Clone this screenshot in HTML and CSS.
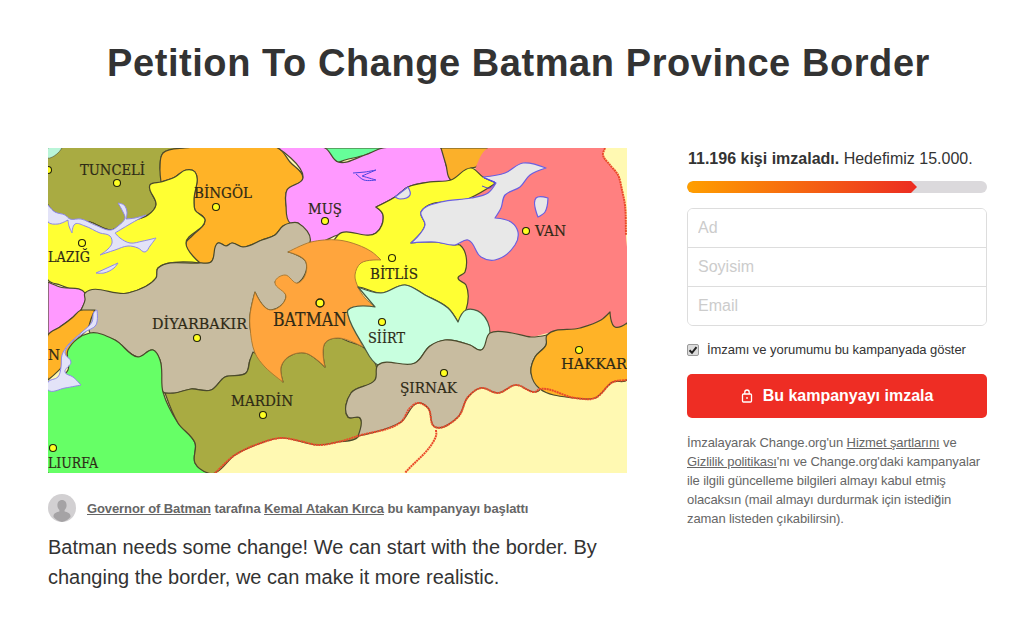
FILE: index.html
```html
<!DOCTYPE html>
<html lang="tr">
<head>
<meta charset="utf-8">
<title>Petition To Change Batman Province Border</title>
<link rel="stylesheet" href="styles.css">
<script src="map.js" defer></script>
</head>
<body>
<h1 class="title">Petition To Change Batman Province Border</h1>
<main class="columns">
  <section class="story">
    <svg class="map" viewBox="48 148 579 325" width="579" height="325" role="img" aria-label="Map of Batman province and its neighbours">
      <g class="shapes">
        <rect class="sea" x="48" y="148" width="579" height="325"/>
        <polygon class="olive" points="48,148 185,148 170,150 163,153 160,168 162,182 150,185 156,205 148,215 125,223 111,230 90,222 70,220 48,205"/>
        <polygon class="mint-corner" points="48,148 62,148 58,153 50,158 48,158"/>
        <polygon class="green-corner" points="325,148 383,148 365,155 345,160 338,162 330,156"/>
        <polygon class="amber" points="185,148 278,148 290,162 303,178 296,185 287,190 286,205 290,223 283,226 275,235 262,240 243,247 232,243 226,246 218,243 215,252 211,262 200,263 186,243 192,236 205,220 195,210 194,200 195,172 186,170 175,177 161,182 160,168 163,153"/>
        <polygon class="pink" points="278,148 325,148 338,162 365,155 383,148 441,148 446,165 450,180 430,182 408,187 395,197 376,207 383,215 376,233 338,235 318,243 310,242 298,223 290,223 286,205 287,190 303,178"/>
        <polygon class="amber-soft" points="441,148 488,148 476,167 471,168 465,177 451,180 446,165"/>
        <polygon class="red-land" points="488,148 605,148 603,155 610,165 618,175 622,190 625,205 626,235 627,323 615,327 610,312 601,320 580,328 548,333 531,337 512,333 490,333 481,313 466,310 466,285 458,278 465,272 460,245 476,167"/>
        <polygon class="yellow" points="48,222 48,280 60,285 85,293 128,293 156,278 158,268 200,263 186,243 205,220 195,210 194,200 195,172 186,170 175,177 161,182 150,185 156,205 148,215 125,223 111,230 90,222 70,220"/>
        <polygon class="yellow" points="471,168 483,177 496,183 470,198 421,212 425,225 411,243 435,242 455,245 460,245 465,272 458,278 466,285 466,310 458,322 448,308 425,295 405,285 381,293 358,287 338,290 338,235 376,233 383,215 376,207 395,197 408,187 430,182 451,180"/>
        <polygon class="pink" points="48,282 60,287 85,293 81,310 72,318 60,327 48,335"/>
        <polygon class="amber" points="81,310 95,310 92,320 85,332 72,345 65,363 48,380 48,335 60,327 72,318"/>
        <polygon class="tan" points="85,293 128,293 156,278 158,268 200,263 211,262 218,243 226,246 232,243 243,247 262,240 275,235 283,226 290,223 298,223 310,242 288,252 306,262 298,283 275,282 286,297 270,310 255,292 250,315 250,327 255,353 250,360 246,373 225,377 211,390 191,389 175,393 163,392 160,360 153,350 138,357 115,340 90,333 95,310 81,310 85,300"/>
        <polygon class="green" points="90,333 115,340 138,357 153,350 160,360 163,392 178,423 195,443 195,463 208,473 48,473 48,388 68,370 68,350"/>
        <polygon class="olive" points="165,393 175,393 191,389 211,390 225,377 246,373 250,360 253,352 265,360 283,382 281,367 288,357 305,353 325,367 325,343 338,338 350,342 363,347 376,365 375,380 351,393 348,417 360,418 358,437 338,442 318,445 281,438 261,443 235,455 215,473 208,473 195,463 195,443 178,423"/>
        <polygon class="batman" points="288,252 311,242 338,240 358,245 372,252 381,260 361,263 355,275 358,287 365,298 375,307 348,310 348,315 356,332 363,347 338,338 325,343 325,367 305,353 288,357 281,367 283,382 265,367 255,353 250,327 250,315 255,292 270,310 286,297 275,282 285,275 298,283 306,262"/>
        <polygon class="mint" points="358,287 381,293 405,285 425,295 448,308 458,322 466,310 481,313 490,333 481,350 470,345 445,340 430,346 415,363 378,365 363,345 348,315 348,310 375,307"/>
        <polygon class="tan" points="378,365 415,363 430,346 445,340 470,345 481,350 490,333 512,333 531,337 547,335 546,345 535,357 531,373 540,389 535,392 516,385 498,393 481,388 468,397 458,417 435,427 428,408 418,403 401,422 358,436 360,418 348,417 351,393 375,380"/>
        <polygon class="amber" points="547,335 580,328 601,320 610,312 615,327 627,323 627,380 613,382 595,398 575,398 540,389 531,373 535,357 546,345"/>
        <polygon class="lake" points="546,168 523,163 505,173 483,177 496,183 488,193 471,198 441,202 421,212 425,225 411,243 435,242 455,245 468,240 481,257 495,260 515,245 518,232 511,222 495,218 501,208 505,195 520,187 530,175"/>
        <polygon class="lake" points="536,198 548,198 545,212 538,217"/>
        <polygon class="lake" points="395,197 408,187 410,195 400,199"/>
        <polygon class="water" points="48,205 55,212 65,215 70,219 81,219 95,225 111,230 118,226 125,218 123,212 118,203 124,205 127,212 126,219 135,218 146,215 130,224 115,233 120,238 130,243 143,241 156,238 150,246 145,252 138,248 128,246 115,250 100,255 108,249 112,243 110,236 100,233 85,226 75,224 72,233 69,226 68,220 58,224 48,222"/>
        <polygon class="water" points="96,273 118,263 114,268 104,273"/>
        <polygon class="water" points="97,310 96,325 85,332 71,343 65,353 71,362 65,372 73,377 81,385 65,388 48,390 48,382 58,377 61,367 62,355 68,345 82,332 92,322 94,312"/>
        <polyline class="squiggle" points="353,173 365,172 376,170 362,176 376,180 364,180 356,174"/>
        <polyline class="squiggle" points="484,178 495,182 490,188 482,186"/>
        <polyline class="border" points="215,473 235,455 261,443 281,438 300,441 318,445 338,442 358,436 401,422 410,408 418,403 428,408 435,427 458,417 468,397 481,388 498,393 516,385 535,392 540,389 575,398 595,398 613,382 627,380"/>
        <polyline class="border" points="436,430 436,436 405,473"/>
        <polyline class="border" points="605,148 603,155 610,165 618,175 622,190 625,205 626,235"/>
      </g>
      <g class="dots">
        <circle cx="48" cy="170" r="3.5"/><circle cx="117" cy="183" r="3.5"/><circle cx="216" cy="207" r="3.5"/><circle cx="325" cy="221" r="3.5"/>
        <circle cx="82" cy="243" r="3.5"/><circle class="large" cx="320" cy="303" r="4"/><circle cx="392" cy="258" r="3.5"/>
        <circle cx="526" cy="231" r="3.5"/><circle cx="382" cy="322" r="3.5"/><circle cx="197" cy="338" r="3.5"/>
        <circle cx="263" cy="415" r="3.5"/><circle cx="444" cy="373" r="3.5"/><circle cx="579" cy="350" r="3.5"/>
        <circle cx="53" cy="448" r="3.5"/>
      </g>
      <g class="labels">
        <text x="80" y="175" lengthAdjust="spacingAndGlyphs" textLength="65">TUNCELİ</text>
        <text x="194" y="198" lengthAdjust="spacingAndGlyphs" textLength="58">BİNGÖL</text>
        <text x="308" y="214" lengthAdjust="spacingAndGlyphs" textLength="34">MUŞ</text>
        <text x="48" y="262" lengthAdjust="spacingAndGlyphs" textLength="42">LAZIĞ</text>
        <text x="152" y="329" lengthAdjust="spacingAndGlyphs" textLength="95">DİYARBAKIR</text>
        <text class="big" x="273" y="326" lengthAdjust="spacingAndGlyphs" textLength="74">BATMAN</text>
        <text x="370" y="279" lengthAdjust="spacingAndGlyphs" textLength="48">BİTLİS</text>
        <text x="368" y="343" lengthAdjust="spacingAndGlyphs" textLength="37">SİİRT</text>
        <text x="535" y="236" lengthAdjust="spacingAndGlyphs" textLength="31">VAN</text>
        <text x="400" y="393" lengthAdjust="spacingAndGlyphs" textLength="57">ŞIRNAK</text>
        <text x="231" y="406" lengthAdjust="spacingAndGlyphs" textLength="62">MARDİN</text>
        <text x="561" y="369" lengthAdjust="spacingAndGlyphs" textLength="66">HAKKAR</text>
        <text x="48" y="468" lengthAdjust="spacingAndGlyphs" textLength="50">LIURFA</text>
        <text x="48" y="360" lengthAdjust="spacingAndGlyphs" textLength="12">N</text>
      </g>
    </svg>
    <div class="byline">
      <svg class="avatar" viewBox="0 0 28 28" width="28" height="28" aria-hidden="true">
        <circle class="avatar-bg" cx="14" cy="14" r="14"/>
        <path class="avatar-fg" d="M14 6c3 0 4.600 2.300 4.600 5.200 0 2-.8 3.700-2 4.800v1.400c2.700.6 5.900 1.900 5.900 4.600v1.100A13.900 13.900 0 0 1 14 28a13.900 13.900 0 0 1-8.500-4.900V22c0-2.700 3.200-4 5.900-4.600V16c-1.200-1.100-2-2.800-2-4.800C9.400 8.300 11 6 14 6z"/>
      </svg>
      <p class="byline-text"><a href="#">Governor of Batman</a> tarafına <a href="#">Kemal Atakan Kırca</a> bu kampanyayı başlattı</p>
    </div>
    <p class="lead">Batman needs some change! We can start with the border. By changing the border, we can make it more realistic.</p>
  </section>
  <aside class="sign">
    <p class="count"><strong>11.196 kişi imzaladı.</strong> Hedefimiz 15.000.</p>
    <div class="progress"><div class="progress-fill"></div></div>
    <form class="fields">
      <input class="field" type="text" placeholder="Ad">
      <input class="field" type="text" placeholder="Soyisim">
      <input class="field" type="text" placeholder="Email">
    </form>
    <label class="consent">
      <span class="check"><svg viewBox="0 0 12 12" width="12" height="12" aria-hidden="true"><path d="M2.500 6.300l2.500 2.500 4.500-5.600" /></svg></span>
      <span>İmzamı ve yorumumu bu kampanyada göster</span>
    </label>
    <button class="cta" type="button">
      <svg class="lock" viewBox="0 0 12 14" width="12" height="14" aria-hidden="true"><rect x="1.500" y="5" width="9" height="8" rx="1"/><path d="M3.800 5V3.200a2.200 2.200 0 0 1 4.400 0V5"/><path d="M6 8v2"/></svg>
      <span>Bu kampanyayı imzala</span>
    </button>
    <p class="legal">İmzalayarak Change.org'un <a href="#">Hizmet şartlarını</a> ve<br><a href="#">Gizlilik politikası</a>'nı ve Change.org'daki kampanyalar<br>ile ilgili güncelleme bilgileri almayı kabul etmiş<br>olacaksın (mail almayı durdurmak için istediğin<br>zaman listeden çıkabilirsin).</p>
  </aside>
</main>
</body>
</html>
```
FILE: map.js
```js
// Turns the map's measured outlines into smooth curves, keeping sharp cusps sharp.
document.querySelectorAll('.shapes polygon, .shapes polyline').forEach(function (el) {
  var closed = el.tagName.toLowerCase() === 'polygon';
  var pts = el.getAttribute('points').trim().split(/\s+/).map(function (s) {
    return s.split(',').map(Number);
  });
  var n = pts.length;
  function at(i) {
    return closed ? pts[(i + n) % n] : pts[Math.max(0, Math.min(n - 1, i))];
  }
  function tangent(i) {
    var a = at(i - 1), b = at(i), c = at(i + 1);
    var ux = b[0] - a[0], uy = b[1] - a[1], vx = c[0] - b[0], vy = c[1] - b[1];
    var lu = Math.hypot(ux, uy) || 1, lv = Math.hypot(vx, vy) || 1;
    if ((ux * vx + uy * vy) / (lu * lv) < -0.2) return [0, 0];
    var tx = ux / lu + vx / lv, ty = uy / lu + vy / lv, l = Math.hypot(tx, ty) || 1;
    return [tx / l, ty / l];
  }
  var d = 'M' + pts[0].join(' ');
  var end = closed ? n : n - 1;
  for (var i = 0; i < end; i++) {
    var p = at(i), q = at(i + 1), s = Math.hypot(q[0] - p[0], q[1] - p[1]) * 0.33;
    var t0 = tangent(i), t1 = tangent(i + 1);
    d += 'C' + (p[0] + t0[0] * s).toFixed(1) + ' ' + (p[1] + t0[1] * s).toFixed(1) + ' ' +
      (q[0] - t1[0] * s).toFixed(1) + ' ' + (q[1] - t1[1] * s).toFixed(1) + ' ' + q.join(' ');
  }
  if (closed) d += 'Z';
  var path = document.createElementNS('http://www.w3.org/2000/svg', 'path');
  path.setAttribute('d', d);
  path.setAttribute('class', el.getAttribute('class'));
  el.parentNode.replaceChild(path, el);
});
```
FILE: styles.css
```css
* { box-sizing: border-box; }
html, body { margin: 0; background: #fff; }
body { font-family: "Liberation Sans", Arial, sans-serif; color: #333; overflow: hidden; height: 630px; }

.title { margin: 0; padding: 39px 34px 0 48px; text-align: center; font-size: 38px; line-height: 48px; font-weight: 700; color: #333; letter-spacing: 0.57px; }

.columns { display: flex; gap: 60px; padding: 61px 36px 0 48px; }
.story { width: 579px; flex: none; }
.sign { width: 300px; flex: none; }

.map { display: block; }
.shapes { filter: blur(0.4px); }
.shapes path { stroke: #4b4a2c; stroke-width: 1.2; stroke-linejoin: round; }
.sea { fill: #fff9b2; }
.shapes .olive { fill: #a9ab42; }
.shapes .amber { fill: #ffb327; }
.shapes .amber-soft { fill: #fbb02a; }
.shapes .pink { fill: #ff99ff; }
.shapes .red-land { fill: #ff8080; stroke: none; }
.shapes .yellow { fill: #ffff33; }
.shapes .tan { fill: #c8bca0; }
.shapes .green { fill: #66ff66; }
.shapes .green-corner { fill: #66ff99; }
.shapes .mint-corner { fill: #b9f5d8; stroke-width: .6; }
.shapes .batman { fill: #ffa53d; stroke: #a8762e; stroke-width: .9; }
.shapes .mint { fill: #c8ffdf; stroke: #4b5a40; }
.shapes .lake { fill: #e8e8e8; stroke: #6a5fe0; stroke-width: 1.2; }
.shapes .water { fill: #e3e3f8; stroke: #8d88e8; stroke-width: 1; }
.shapes .squiggle { fill: none; stroke: #4b44e0; stroke-width: 1; }
.shapes .border { fill: none; stroke: #ea4a2a; stroke-width: 2; stroke-dasharray: 2 .6; }

.dots circle { fill: #ffff22; stroke: #22220c; stroke-width: 1.100; }
.dots .large { stroke-width: 1.500; }
.labels text { font-family: "DejaVu Serif", serif; font-size: 14.5px; fill: #2e2a16; stroke: #2e2a16; stroke-width: .2; }
.labels .big { font-size: 18px; }

.byline { display: flex; align-items: center; gap: 11px; margin-top: 21px; height: 28px; }
.avatar { flex: none; display: block; }
.avatar-bg { fill: #d2d0d2; }
.avatar-fg { fill: #a5a3a5; }
.byline-text { margin: 0; font-size: 13px; font-weight: 700; color: #666; letter-spacing: -0.1px; }
.byline-text a { color: #666; }

.lead { margin: 10px 0 0; font-size: 20px; line-height: 30px; color: #333; }

.count { margin: 0 0 0 1px; font-size: 16px; line-height: 20px; padding-top: 1px; }
.count strong { font-weight: 700; }

.progress { margin-top: 12px; height: 12px; border-radius: 6px; background: #dbd9dc; overflow: hidden; }
.progress-fill { width: 230px; height: 100%; background: linear-gradient(90deg, #ff9f00, #ec2c22); clip-path: polygon(0 0, 224px 0, 100% 50%, 224px 100%, 0 100%); border-radius: 6px 0 0 6px; }

.fields { display: flex; flex-direction: column; margin-top: 15px; border: 1px solid #ddd; border-radius: 6px; overflow: hidden; }
.field { display: block; width: 100%; height: 39px; border: 0; border-top: 1px solid #ddd; padding: 0 10px; font: 16px "Liberation Sans", Arial, sans-serif; color: #333; outline: 0; background: #fff; }
.field:first-child { border-top: 0; height: 38px; }
.field:last-child { height: 39px; }
.field::placeholder { color: #ccc; opacity: 1; }

.consent { display: flex; align-items: center; gap: 8px; margin-top: 17px; font-size: 13px; line-height: 14px; color: #333; letter-spacing: -0.05px; }
.check { width: 12px; height: 12px; flex: none; background: #dcdcdc; border: 1px solid #9a9a9a; border-radius: 2px; display: flex; align-items: center; justify-content: center; }
.check svg { flex: none; }
.check path { fill: none; stroke: #222; stroke-width: 2; }

.cta { display: flex; align-items: center; justify-content: center; gap: 10px; width: 100%; height: 44px; margin-top: 17px; border: 0; border-radius: 5px; background: #ee2d24; color: #fff; font: 700 16px "Liberation Sans", Arial, sans-serif; }
.lock { fill: none; stroke: #fff; stroke-width: 1.300; }

.legal { margin: 15px 0 0; font-size: 13px; line-height: 19px; color: #666; letter-spacing: -0.1px; }
.legal a { color: #666; }
```
